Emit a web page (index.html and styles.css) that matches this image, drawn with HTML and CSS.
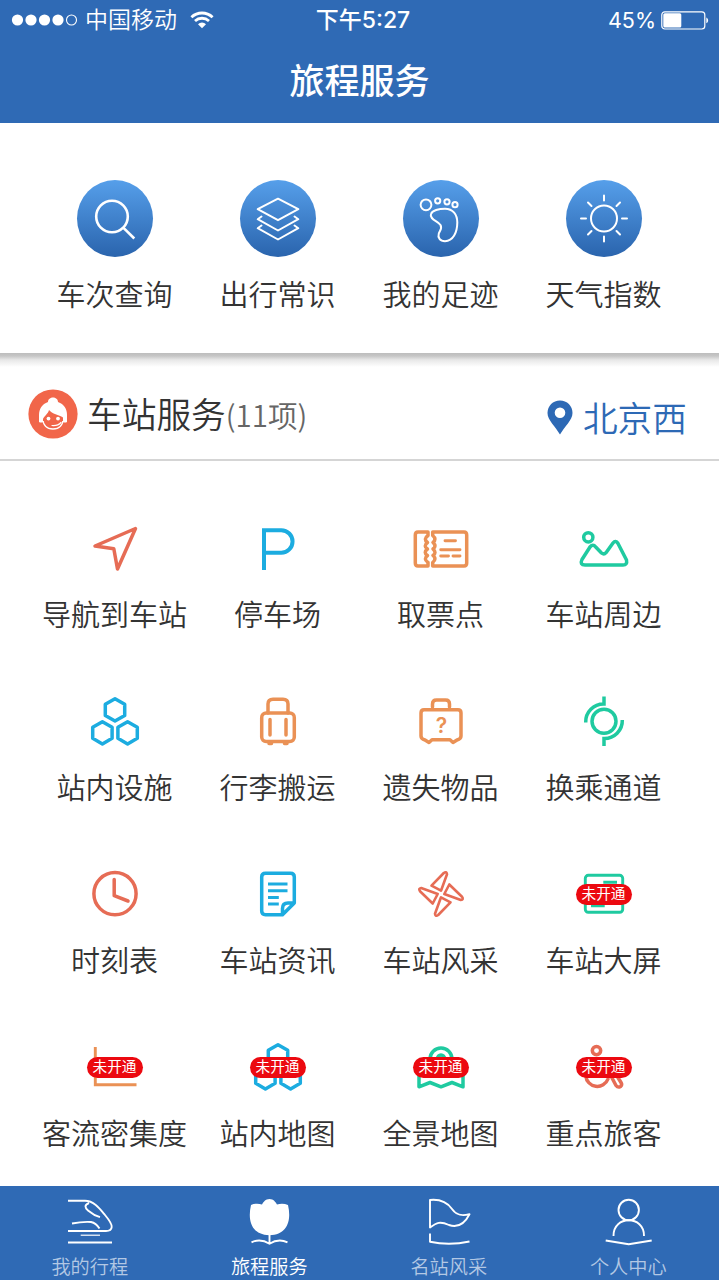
FILE: index.html
```html
<!DOCTYPE html>
<html lang="zh-CN">
<head>
<meta charset="utf-8">
<title>旅程服务</title>
<link rel="stylesheet" href="styles.css">
</head>
<body>
<div class="app">
  <header class="header">
    <div class="status">
      <div class="status-left">
        <svg class="signal" width="68" height="14" viewBox="0 0 68 14"><g fill="#fff"><circle cx="7.5" cy="7" r="5.6"/><circle cx="21" cy="7" r="5.6"/><circle cx="34.5" cy="7" r="5.6"/><circle cx="48" cy="7" r="5.6"/></g><circle cx="61.5" cy="7" r="5" fill="none" stroke="#fff" stroke-width="1.1"/></svg>
        <span class="carrier">中国移动</span>
        <svg class="wifi" width="24" height="18" viewBox="0 0 24 18" fill="none" stroke="#fff" stroke-width="2.8"><path d="M1.4 6.2A15.5 15.5 0 0 1 22.6 6.2"/><path d="M5 10A10.3 10.3 0 0 1 19 10"/><path d="M8 13.2A5.7 5.7 0 0 1 16 13.2L12 17.3Z" fill="#fff" stroke="none"/></svg>
      </div>
      <div class="time">下午5:27</div>
      <div class="status-right">
        <span>45%</span>
        <svg width="48" height="19" viewBox="0 0 48 19"><rect x=".8" y=".8" width="43" height="17.2" rx="3" fill="none" stroke="#fff" stroke-width="1.2"/><rect x="2.3" y="2.3" width="18" height="14.2" rx="1.5" fill="#fff"/><path d="M45.3 6.5c2.4.8 2.4 5 0 5.8z" fill="#fff"/></svg>
      </div>
    </div>
    <h1 class="title">旅程服务</h1>
  </header>

  <section class="quick">
    <a class="quick-item"><span class="disc"><svg viewBox="-38 -38 76 76"><circle cx="-3" cy="-2" r="15.8"/><path d="M8.5 9.3 19.3 20"/></svg></span><span class="label">车次查询</span></a>
    <a class="quick-item"><span class="disc"><svg class="fine" viewBox="-38 -38 76 76"><path d="M0-19.8 20.3-9.3 0 1.7-20.3-9.3ZM-16.5-2-20.3.7 0 12 20.3.7 16.5-2M-16.5 7-20.3 9.7 0 21 20.3 9.7 16.5 7"/></svg></span><span class="label">出行常识</span></a>
    <a class="quick-item"><span class="disc"><svg class="fine" viewBox="-38 -38 76 76"><circle cx="-15" cy="-13.7" r="5.4"/><circle cx="-3.3" cy="-17.7" r="2.6"/><circle cx="6" cy="-16.7" r="2.6"/><circle cx="14" cy="-13.8" r="2.6"/><path d="M-10-4.5C-9-8-2-9.8 4-9.8 12-9.8 16.3-4 16.3 4 16.3 14 12 22.7 4 22.7-1 22.7-3.5 19-2.2 15-1 12 1.5 10-.5 6.5-3 2.5-12 1-10-4.5Z"/></svg></span><span class="label">我的足迹</span></a>
    <a class="quick-item"><span class="disc"><svg class="fine" viewBox="-38 -38 76 76"><circle r="13"/><path d="M0-23V-18M0 18V23M-23 0H-18M18 0H23M-16-16-12.5-12.5M16-16 12.5-12.5M-16 16-12.5 12.5M16 16 12.5 12.5"/></svg></span><span class="label">天气指数</span></a>
  </section>

  <section class="station">
    <div class="station-head">
      <svg class="avatar" viewBox="-25 -25 50 50" width="50" height="50"><circle r="24.6" fill="#f1664a"/><path d="M-5-12C-5-18 5-18 5-12 11-10 14-5 14 1L14 8Q12 9 10 8L-10 8Q-12 9-14 8V1C-14-5-11-10-5-12Z" fill="#fff"/><path d="M-10.5 4C-10 10-7 15 0 15S10 10 10.5 4Z" fill="#f1664a" stroke="#fff" stroke-width="1.4"/><path d="M-10 5C-9 2-5 0-4-4-1 0 6 1 10 3.5V7H-10Z" fill="#f1664a"/><circle cx="-4.5" cy="4.6" r="1.9" fill="#fff"/><circle cx="5" cy="4.6" r="1.9" fill="#fff"/><path d="M-1 11.5Q5 12 8 8.5" fill="none" stroke="#fff" stroke-width="1.2" stroke-linecap="round"/></svg>
      <h2 class="station-title">车站服务</h2><span class="count">(11项)</span>
      <a class="place"><svg width="26" height="35" viewBox="0 0 26 35"><path fill-rule="evenodd" d="M13 .5C6 .5.5 6 .5 12.9.5 20 8.5 26.5 13 34.5 17.5 26.5 25.5 20 25.5 12.9 25.5 6 20 .5 13 .5ZM13 7.5A5.3 5.3 0 1 1 13 18.1 5.3 5.3 0 0 1 13 7.5Z" fill="#2d69b5"/></svg><span class="place-name">北京西</span></a>
    </div>
    <div class="grid">
      <a class="item red"><span class="icon"><svg viewBox="-36 -30 72 60"><path d="M20.5-19.5-20-2-1.2.8 2.5 21Z"/></svg></span><span class="label">导航到车站</span></a>
      <a class="item blue"><span class="icon"><svg viewBox="-36 -30 72 60"><path class="thick" d="M-14 22V-17.8H3.3A11.2 11.2 0 0 1 3.3 4.7H-14"/></svg></span><span class="label">停车场</span></a>
      <a class="item orange"><span class="icon"><svg viewBox="-36 -30 72 60"><path d="M-13-16H-23Q-25.7-16-25.7-13V15Q-25.7 18-23 18H-13V14.5Q-18 11-13.5 7.5-18 4.5-13.5 1-18-2-13.5-5.5-18-9-13-12.5ZM-8.3-16H23Q25.7-16 25.7-13V15Q25.7 18 23 18H-8.3V14.5Q-4 11-8 7.5-4 4.5-8 1-4-2-8-5.5-4-9-8.3-12.5Z"/><path class="thin" d="M4-7.3H14.5M-.3 1.8H19M-.3 8H7.5M12 8H19"/></svg></span><span class="label">取票点</span></a>
      <a class="item green"><span class="icon"><svg viewBox="-36 -30 72 60"><circle cx="-15.7" cy="-10.7" r="4.6"/><path d="M-22 11.5-14-1Q-11-4.5-8.3-1L-2.5 5Q0 7 2 4.7L9-5Q11.7-8.3 14-4.5L22.5 12Q23.5 17 19 17H-19Q-24.5 17-22 11.5Z"/></svg></span><span class="label">车站周边</span></a>

      <a class="item blue"><span class="icon"><svg viewBox="-36 -30 72 60"><path d="M0-22.2 9.7-16.7V-5.5L0 0-9.7-5.5V-16.7ZM-12.6.7-2.9 6.2V17.3L-12.6 22.9-22.3 17.3V6.2ZM12.6.7 22.3 6.2V17.3L12.6 22.9 2.9 17.3V6.2Z"/></svg></span><span class="label">站内设施</span></a>
      <a class="item orange"><span class="icon"><svg viewBox="-36 -30 72 60"><rect x="-16.3" y="-8" width="32.6" height="28.6" rx="4.5"/><path d="M-10-8V-17Q-10-21.8-5-21.8H5Q10-21.8 10-17V-8M-8-1.5V14M8-1.5V14M-9 22.5H-6.5M6.5 22.5H9"/></svg></span><span class="label">行李搬运</span></a>
      <a class="item orange"><span class="icon"><svg viewBox="-36 -30 72 60"><path d="M-17-11.3H17Q20-11.3 20-8V15Q20 18 16 19L12 21.5 9 18.8H-9L-12 21.5-16 19Q-20 18-20 15V-8Q-20-11.3-17-11.3ZM-8.5-14V-17Q-8.5-21-4.5-21H4.5Q8.5-21 8.5-17V-14"/><text class="mark" x=".5" y="12" text-anchor="middle">?</text></svg></span><span class="label">遗失物品</span></a>
      <a class="item green"><span class="icon"><svg viewBox="-36 -30 72 60"><circle cy=".3" r="12"/><path class="butt" d="M-18.3 1.5A17.9 17.9 0 0 1 0-17V-24.5M18.3-1A17.9 17.9 0 0 1 0 17.5V25"/></svg></span><span class="label">换乘通道</span></a>

      <a class="item red"><span class="icon"><svg viewBox="-36 -30 72 60"><circle cy="-.3" r="21.1"/><path d="M-.8-14.5V1.7L13 7"/></svg></span><span class="label">时刻表</span></a>
      <a class="item blue"><span class="icon"><svg viewBox="-36 -30 72 60"><path d="M16.3 9V-17Q16.3-20.8 12.5-20.8H-12.5Q-16.3-20.8-16.3-17V17Q-16.3 20.7-12.5 20.7H4.5L16.3 9H10Q4.5 9 4.5 14.5V20"/><path class="thin butt" d="M-10-10H9.5M-10-3.3H9.5M-10 3.5H.8M-10 10H.8"/></svg></span><span class="label">车站资讯</span></a>
      <a class="item red"><span class="icon"><svg viewBox="-36 -30 72 60"><g class="petals"><path d="M2.8-21-9.5-8.3 0-3.3 6-19.8Q5.5-23 2.8-21Z"/><path transform="rotate(90)" d="M2.8-21-9.5-8.3 0-3.3 6-19.8Q5.5-23 2.8-21Z"/><path transform="rotate(180)" d="M2.8-21-9.5-8.3 0-3.3 6-19.8Q5.5-23 2.8-21Z"/><path transform="rotate(270)" d="M2.8-21-9.5-8.3 0-3.3 6-19.8Q5.5-23 2.8-21Z"/></g></svg></span><span class="label">车站风采</span></a>
      <a class="item green"><span class="icon"><svg viewBox="-36 -30 72 60"><rect class="thin" x="-18.7" y="-18.7" width="37.4" height="37" rx="3"/><path class="thin butt" d="M-.7-11.7H13M-13 11.7H.7"/></svg><b class="badge">未开通</b></span><span class="label">车站大屏</span></a>

      <a class="item orange"><span class="icon"><svg viewBox="-36 -30 72 60"><path class="thin butt" d="M-19.7-20V17.7H21.5"/></svg><b class="badge">未开通</b></span><span class="label">客流密集度</span></a>
      <a class="item blue"><span class="icon"><svg viewBox="-36 -30 72 60"><path d="M0-22.2 9.7-16.7V-5.5L0 0-9.7-5.5V-16.7ZM-12.6.7-2.9 6.2V16.3L-12.6 21.9-22.3 16.3V6.2ZM12.6.7 22.3 6.2V16.3L12.6 21.9 2.9 16.3V6.2Z"/></svg><b class="badge">未开通</b></span><span class="label">站内地图</span></a>
      <a class="item green"><span class="icon"><svg viewBox="-36 -30 72 60"><path d="M-11-8A11 11 0 0 1 11-8M-22 5V19.8L-11 15.5 0 19.8 11 15.5 22 19.8V5"/><circle cy="-8.5" r="3.5"/></svg><b class="badge">未开通</b></span><span class="label">全景地图</span></a>
      <a class="item red"><span class="icon"><svg viewBox="-36 -30 72 60"><circle cx="-7.5" cy="-16.4" r="4.2"/><path d="M-18.2 9A11.5 11.5 0 0 0 4 12M7.5 10 12 18.5Q14 21 16.5 19.5 18.5 18 17 15.5L13 9"/></svg><b class="badge">未开通</b></span><span class="label">重点旅客</span></a>
    </div>
  </section>

  <nav class="tabs">
    <a class="tab"><svg viewBox="-30 -27 60 54"><path d="M-22-21.2H-5C4-21.2 10-13 15-7 20-1 22 3 21.7 5 21.5 8 19 9 16 9H-22M-1-19C-6-17-5-14-2-11.5Q4-6.5 10-4.8M-18 1.5Q-8-.5 1 0 6 1 9.5 6.5"/><path class="hair" d="M-9.3 13.2H10"/><path d="M-22 20.5H22"/></svg><span>我的行程</span></a>
    <a class="tab active"><svg viewBox="-30 -27 60 54"><path class="solid" d="M.5-23C4.500-23 6.500-20 8-17.500 11.500-18.500 15.500-18.500 19-17 22.500-2 19 13 .5 13.200-18 13-21.500-2-18-17-14.500-18.500-10.500-18.500-7-17.500-5.500-20-3.500-23 .5-23Z"/><path d="M.5 12V22M-17.500 20.300Q-8.500 16 .5 21.800 9.500 16 18.500 20.300"/></svg><span>旅程服务</span></a>
    <a class="tab"><svg viewBox="-30 -27 60 54"><path d="M-19 5.5V-22C-9-23-2-20 3-13 7-7 12-5.5 20.5-7.8 16 1 9 6 0 3-9-1-12 .5-19 5.5ZM-19 11.5V19.7Q0 24 20.5 19.5"/></svg><span>名站风采</span></a>
    <a class="tab"><svg viewBox="-30 -27 60 54"><circle cx=".7" cy="-12" r="10.2"/><path d="M-14.5 14C-15-7 16.5-7 16 14M-22.3 18.5.7 22.3 23.7 18.5"/></svg><span>个人中心</span></a>
  </nav>
</div>
</body>
</html>
```
FILE: styles.css
```css
* { box-sizing: border-box; }
body {
  margin: 0;
  background: #fff;
  color: #333;
  font-family: Inter, "Noto Sans CJK SC", sans-serif;
  font-weight: 350;
}
h1, h2 { margin: 0; }
svg { display: block; fill: none; }
.app { width: 719px; height: 1280px; display: flex; flex-direction: column; overflow: hidden; }

.header { height: 123px; flex: none; background: #2f6ab5; color: #fff; }
.status {
  height: 40px;
  display: grid;
  grid-template-columns: 1fr auto 1fr;
  align-items: center;
  padding: 0 10px;
  font-size: 23px;
  font-weight: 400;
  line-height: 40px;
}
.status-left { display: flex; align-items: center; }
.carrier { margin-left: 7px; font-weight: 350; }
.wifi { margin-left: 13px; }
.time { font-size: 23px; padding-left: 7px; font-weight: 500; }
.status-right { display: flex; justify-content: flex-end; align-items: center; gap: 5px; font-size: 21.5px; }
.title { font-size: 35px; line-height: 82px; text-align: center; font-weight: 500; }

.quick {
  height: 230px;
  flex: none;
  display: grid;
  grid-template-columns: repeat(4, 163px);
  padding: 57px 0 0 33px;
}
.quick-item { display: flex; flex-direction: column; align-items: center; }
.disc { width: 76px; height: 77px; border-radius: 50%; background: linear-gradient(#569fea, #2a64ad); margin-left: 1px; }
.disc svg { width: 76px; height: 77px; stroke: #fff; stroke-width: 2.6; }
.disc .fine { stroke-width: 2; stroke-linecap: round; stroke-linejoin: round; }
.label { font-size: 29px; line-height: 40px; white-space: nowrap; }
.quick .label { margin-top: 19px; }

.station { height: 833px; flex: none; background: linear-gradient(#bdbdbd 0, #c6c6c6 3px, #e8e8e8 7px, #fff 14px); }
.station-head {
  height: 108px;
  display: flex;
  align-items: center;
  padding: 15px 32px 0 28px;
  border-bottom: 2px solid #d5d5d5;
}
.station-title { margin-left: 9px; font-size: 34.7px; font-weight: 350; line-height: 50px; padding-top: 3px; }
.count { font-family: "Noto Sans CJK SC", sans-serif; font-size: 29.5px; color: #666; }
.place { margin-left: auto; display: flex; align-items: center; gap: 10px; padding-top: 7px; color: #2d69b5; font-size: 34.7px; line-height: 40px; }
.place-name { padding-top: 3px; }

.grid {
  display: grid;
  grid-template-columns: repeat(4, 163px);
  grid-auto-rows: 173px;
  padding: 57px 0 0 33px;
}
.item { display: flex; flex-direction: column; align-items: center; }
.icon { position: relative; width: 72px; height: 60px; }
.icon svg { width: 72px; height: 60px; stroke: currentColor; stroke-width: 3.5; stroke-linejoin: round; stroke-linecap: round; }
.icon .thick { stroke-width: 4; stroke-linecap: butt; stroke-linejoin: miter; }
.icon .thin { stroke-width: 2.9; }
.icon .petals { stroke-width: 2.6; }
.icon .butt { stroke-linecap: butt; stroke-linejoin: miter; }
.icon .mark { fill: currentColor; stroke: none; font: 600 21px Inter, sans-serif; }
.item .label { margin-top: 18px; color: #333; }
.red { color: #e66c55; }
.blue { color: #1cace0; }
.orange { color: #ea9155; }
.green { color: #1fcaa0; }
.badge {
  position: absolute;
  left: 8px;
  top: 20px;
  width: 56px;
  height: 21px;
  border-radius: 11px;
  background: #ec0910;
  color: #fff;
  font-size: 14.7px;
  font-weight: 400;
  line-height: 21px;
  text-align: center;
}

.tabs { height: 94px; flex: none; display: grid; grid-template-columns: repeat(4, 179.5px); background: #2f6ab5; color: #b3c8e4; }
.tab { display: flex; flex-direction: column; align-items: center; padding-top: 9px; font-size: 19.2px; line-height: 28px; }
.tab svg { width: 60px; height: 54px; stroke: #fff; stroke-width: 1.9; stroke-linejoin: round; }
.tab .hair { stroke-width: 1.2; }
.tab .solid { fill: #fff; stroke: none; }
.tab span { margin-top: 4px; }
.active { color: #fff; }
```
